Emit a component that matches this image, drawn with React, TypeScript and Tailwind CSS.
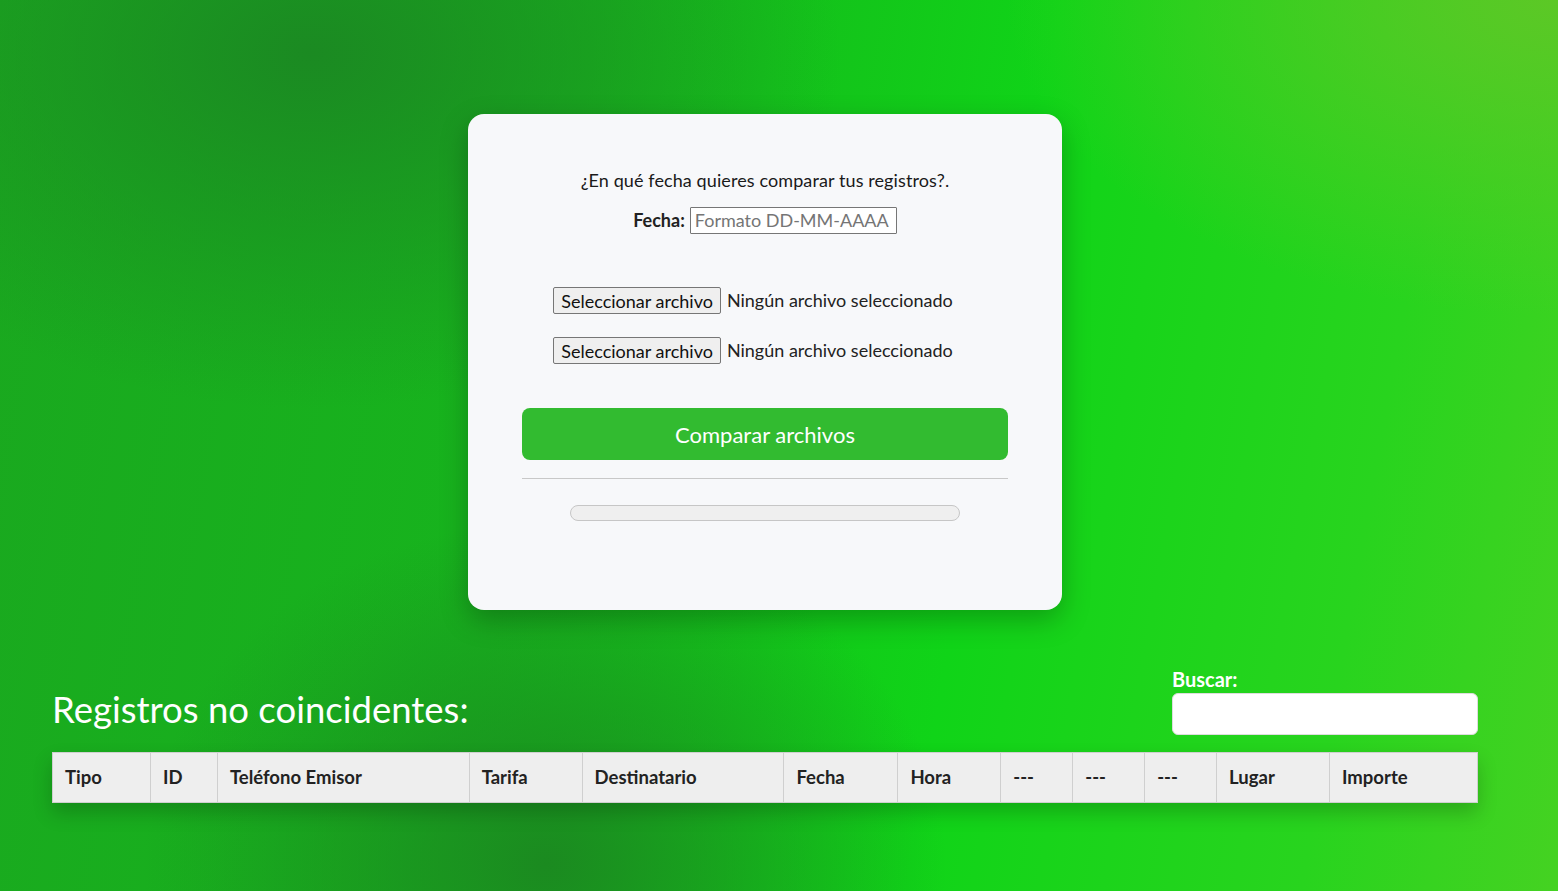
import React from "react";

const columns = [
	{ label: "Tipo", w: "w-[98px]" },
	{ label: "ID", w: "w-[67px]" },
	{ label: "Teléfono Emisor", w: "w-[252px]" },
	{ label: "Tarifa", w: "w-[113px]" },
	{ label: "Destinatario", w: "w-[202px]" },
	{ label: "Fecha", w: "w-[114px]" },
	{ label: "Hora", w: "w-[103px]" },
	{ label: "---", w: "w-[72px]" },
	{ label: "---", w: "w-[72px]" },
	{ label: "---", w: "w-[72px]" },
	{ label: "Lugar", w: "w-[113px]" },
	{ label: "Importe", w: "w-[148px]" },
];

function FilePicker() {
	return (
		<div className="flex items-center justify-center gap-[6px] pr-[24px] text-[18px] text-[#222]">
			<button
				type="button"
				className="h-[27px] px-[7px] border border-[#767676] bg-[#efefef] rounded-[2px] leading-none text-[18px] text-[#111]"
			>
				Seleccionar archivo
			</button>
			<span>Ningún archivo seleccionado</span>
		</div>
	);
}

export default function App() {
	return (
		<div
			className="min-h-[891px] w-full font-['Lato','Liberation_Sans',sans-serif] bg-[radial-gradient(ellipse_at_20%_6%,#1b8a22_0%,rgba(27,138,34,0)_30%),radial-gradient(ellipse_at_35%_97%,#1b8a20_0%,rgba(27,138,32,0)_28%),radial-gradient(ellipse_at_100%_0%,#5cc826_0%,rgba(92,200,38,0)_25%),linear-gradient(100deg,#1aa81f_0%,#17b41d_35%,#10d418_62%,#28d41e_85%,#45d222_100%)]"
		>
			<div className="w-[1530px] pt-[114px] pb-[88px]">
				<div className="mx-auto w-[594px] h-[496px] rounded-[16px] bg-[#f7f8fa] shadow-[0_10px_28px_rgba(0,0,0,0.25)] px-[54px] pt-[56px] flex flex-col items-center">
					<p className="text-[18px] text-[#1a1a1a] leading-[20px] tracking-[0.1px]">
						¿En qué fecha quieres comparar tus registros?.
					</p>
					<div className="mt-[17px] flex items-center gap-[5px]">
						<label className="text-[18px] font-bold text-[#222]">Fecha:</label>
						<input
							type="text"
							placeholder="Formato DD-MM-AAAA"
							className="w-[207px] h-[27px] border border-[#767676] bg-white px-[4px] text-[18px] text-[#222] placeholder:text-[#757575] outline-none rounded-[1px]"
						/>
					</div>
					<div className="mt-[53px] flex flex-col gap-[23px]">
						<FilePicker />
						<FilePicker />
					</div>
					<button
						type="button"
						className="mt-[44px] w-full h-[52px] rounded-[8px] bg-[#32bb30] text-white text-[22px]"
					>
						Comparar archivos
					</button>
					<div className="mt-[18px] w-full h-px bg-[#c8c8c8]" />
					<div className="mt-[26px] w-[390px] h-[16px] rounded-full bg-[#efefef] border border-[#c6c6c6]" />
				</div>

				<div className="ml-[52px] w-[1426px] mt-[58px]">
					<div className="flex items-end justify-between">
						<h2 className="text-[36.5px] text-white leading-none pb-[8px]">
							Registros no coincidentes:
						</h2>
						<div className="flex flex-col w-[306px]">
							<label className="text-[20px] font-bold text-white leading-[22px]">Buscar:</label>
							<input
								type="text"
								className="mt-[3px] h-[42px] rounded-[6px] bg-white border border-[#ddd] outline-none px-2"
							/>
						</div>
					</div>
					<table className="mt-[17px] w-full border-collapse bg-[#eeeeee] shadow-[0_10px_20px_rgba(0,0,0,0.2)]">
						<thead>
							<tr className="h-[50px]">
								{columns.map((c, i) => (
									<th
										key={i}
										className={`${c.w} border border-[#cfcfcf] text-left pl-[12px] text-[18.5px] font-bold text-[#222]`}
									>
										{c.label}
									</th>
								))}
							</tr>
						</thead>
					</table>
				</div>
			</div>
		</div>
	);
}
